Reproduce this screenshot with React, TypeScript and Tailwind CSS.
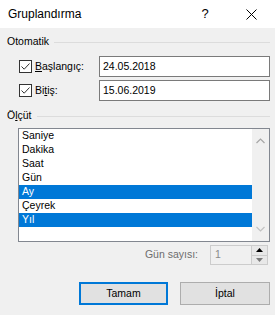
const items = ["Saniye", "Dakika", "Saat", "Gün", "Ay", "Çeyrek", "Yıl"];
const selected = ["Ay", "Yıl"];

const Check = () => (
  <span className="w-[13px] h-[13px] shrink-0 border border-[#333333] bg-white flex items-center justify-center">
    <svg width="11" height="11" viewBox="0 0 11 11">
      <path d="M1.5 5.5 L4.2 8.2 L9.5 2.5" fill="none" stroke="#333333" strokeWidth="1" />
    </svg>
  </span>
);

const GroupHeader = ({ children }: { children: React.ReactNode }) => (
  <div className="flex items-center gap-[5px] h-[14px] text-black">
    <span>{children}</span>
    <div className="flex-1 h-px bg-[#dcdcdc]" />
  </div>
);

const DateRow = ({ label, value }: { label: React.ReactNode; value: string }) => (
  <div className="flex items-center pl-[12px] h-[21px]">
    <Check />
    <span className="ml-[3px] w-[64px] text-black">{label}</span>
    <div className="flex-1 h-[21px] border border-[#7a7a7a] bg-white flex items-center pl-[3px] text-black">
      {value}
    </div>
  </div>
);

export default function App() {
  return (
    <div
      className="w-[275px] h-[315px] bg-[#f0f0f0] flex flex-col text-[10.5px] overflow-hidden"
      style={{ fontFamily: '"Liberation Sans", Arial, sans-serif' }}
    >
      <div className="h-[28px] bg-white flex items-center pl-[8px] shrink-0">
        <span className="text-[12px] text-black flex-1">Gruplandırma</span>
        <span className="text-[13px] text-black w-[10px] mr-[36px] text-center">?</span>
        <svg width="11" height="11" viewBox="0 0 11 11" className="mr-[18px]">
          <path d="M0.5 0.5 L10.5 10.5 M10.5 0.5 L0.5 10.5" stroke="#000" strokeWidth="1" />
        </svg>
      </div>

      <div className="flex flex-col pl-[7px] pr-[5px]">
        <div className="mt-[7px]">
          <GroupHeader>Otomatik</GroupHeader>
        </div>
        <div className="mt-[7px] flex flex-col gap-[3px]">
          <DateRow
            label={
              <>
                <span className="underline">B</span>aşlangıç:
              </>
            }
            value="24.05.2018"
          />
          <DateRow
            label={
              <>
                Bi<span className="underline">t</span>iş:
              </>
            }
            value="15.06.2019"
          />
        </div>

        <div className="mt-[8px]">
          <GroupHeader>
            Ö<span className="underline">l</span>çüt
          </GroupHeader>
        </div>

        <div className="mt-[5px] ml-[11px] h-[114px] border border-[#828790] bg-white flex">
          <div className="flex-1 flex flex-col">
            {items.map((it) => (
              <div
                key={it}
                className={
                  selected.includes(it)
                    ? "h-[14px] flex items-center pl-[3px] bg-[#0078d7] text-white"
                    : "h-[14px] flex items-center pl-[3px] text-black"
                }
              >
                {it}
              </div>
            ))}
          </div>
          <div className="w-[17px] bg-[#f0f0f0] flex flex-col items-center justify-between py-[9px]">
            <svg width="9" height="6" viewBox="0 0 9 6">
              <path d="M0.5 5 L4.5 1 L8.5 5" fill="none" stroke="#a6a6a6" strokeWidth="1.2" />
            </svg>
            <svg width="9" height="6" viewBox="0 0 9 6">
              <path d="M0.5 1 L4.5 5 L8.5 1" fill="none" stroke="#c2c2c2" strokeWidth="1.2" />
            </svg>
          </div>
        </div>

        <div className="mt-[3px] flex items-center justify-end pr-[2px] h-[20px]">
          <span className="text-[#6d6d6d] mr-[12px]">Gün sayısı:</span>
          <div className="w-[58px] h-[20px] border border-[#cccccc] bg-[#f0f0f0] flex">
            <div className="flex-1 flex items-center pl-[4px] text-[#8a8a8a]">1</div>
            <div className="w-[16px] flex flex-col border-l border-[#cccccc]">
              <div className="flex-1 flex items-center justify-center bg-[#e8e8e8] border-b border-[#cccccc]">
                <svg width="7" height="4" viewBox="0 0 7 4">
                  <path d="M0 4 L3.5 0 L7 4 Z" fill="#000" />
                </svg>
              </div>
              <div className="flex-1 flex items-center justify-center bg-[#e8e8e8]">
                <svg width="7" height="4" viewBox="0 0 7 4">
                  <path d="M0 0 L3.5 4 L7 0 Z" fill="#7a7a7a" />
                </svg>
              </div>
            </div>
          </div>
        </div>

        <div className="mt-[17px] flex justify-end gap-[12px]">
          <button className="w-[89px] h-[23px] border-2 border-[#0078d7] bg-[#e1e1e1] text-black">
            Tamam
          </button>
          <button className="w-[90px] h-[23px] border border-[#adadad] bg-[#e1e1e1] text-black">
            İptal
          </button>
        </div>
      </div>
    </div>
  );
}
